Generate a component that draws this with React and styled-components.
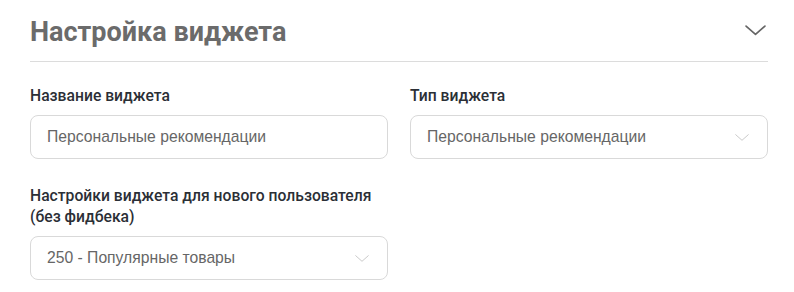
import React from "react";
import styled, { createGlobalStyle } from "styled-components";

const GlobalStyle = createGlobalStyle`
  html, body {
    margin: 0;
    padding: 0;
    background: #fff;
  }
  body {
    font-family: Roboto, "Liberation Sans", Arial, sans-serif;
  }
`;

const Chevron = ({ size = 20, color = "#666", width = 1.6 }) => (
  <svg width={size} height={size / 2} viewBox="0 0 20 10" fill="none">
    <path d="M1 1 L10 9 L19 1" stroke={color} strokeWidth={width} strokeLinecap="round" strokeLinejoin="round" />
  </svg>
);

const App = () => {
  return (
    <>
      <GlobalStyle />
      <Panel>
        <Header>
          <Title>Настройка виджета</Title>
          <Toggle aria-label="Свернуть">
            <Chevron size={21} />
          </Toggle>
        </Header>
        <Grid>
          <Field>
            <Label>Название виджета</Label>
            <Input defaultValue="Персональные рекомендации" />
          </Field>
          <Field>
            <Label>Тип виджета</Label>
            <Select>
              <SelectValue>Персональные рекомендации</SelectValue>
              <Chevron size={14} color="#c4c4c4" width={1.3} />
            </Select>
          </Field>
          <Field>
            <Label>
              Настройки виджета для нового пользователя
              <br />
              (без фидбека)
            </Label>
            <Select>
              <SelectValue>250 - Популярные товары</SelectValue>
              <Chevron size={14} color="#c4c4c4" width={1.3} />
            </Select>
          </Field>
        </Grid>
      </Panel>
    </>
  );
};

export default App;

const Panel = styled.div`
  width: 738px;
  padding: 0 26px 0 30px;
`;

const Header = styled.div`
  display: flex;
  align-items: center;
  justify-content: space-between;
  height: 62px;
  border-bottom: 1px solid #dcdcdc;
  box-sizing: border-box;
`;

const Title = styled.h2`
  margin: 0;
  padding-top: 3px;
  font-size: 27px;
  font-weight: 700;
  color: #6b6b6b;
`;

const Toggle = styled.button`
  border: none;
  background: none;
  padding: 0;
  margin-right: 2px;
  display: flex;
  cursor: pointer;
`;

const Grid = styled.div`
  display: grid;
  grid-template-columns: 358px 358px;
  column-gap: 22px;
  row-gap: 26px;
  padding-top: 23px;
`;

const Field = styled.div`
  display: flex;
  flex-direction: column;
`;

const Label = styled.label`
  font-size: 15.7px;
  font-weight: 500;
  line-height: 21px;
  color: #2b2f36;
  margin-bottom: 9px;
`;

const Input = styled.input`
  box-sizing: border-box;
  height: 44px;
  width: 100%;
  border: 1px solid #d9d9d9;
  border-radius: 8px;
  padding: 0 16px;
  font-family: "Liberation Sans", Arial, sans-serif;
  font-size: 15.7px;
  color: #666;
  outline: none;
`;

const Select = styled.div`
  box-sizing: border-box;
  height: 44px;
  display: flex;
  align-items: center;
  justify-content: space-between;
  border: 1px solid #d9d9d9;
  border-radius: 8px;
  padding: 0 18px 0 16px;
  cursor: pointer;
`;

const SelectValue = styled.span`
  font-family: "Liberation Sans", Arial, sans-serif;
  font-size: 15.7px;
  color: #666;
`;
